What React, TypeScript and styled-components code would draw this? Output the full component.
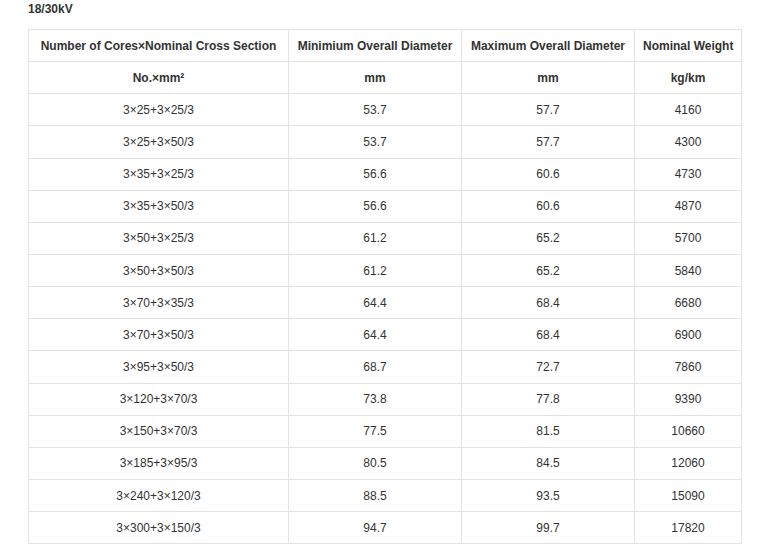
import React from "react";
import styled, { createGlobalStyle } from "styled-components";

const Global = createGlobalStyle`
  html, body { margin: 0; padding: 0; background: #fff; }
  body { font-family: "Liberation Sans", Arial, sans-serif; color: #333; }
`;

const Page = styled.div`
  padding: 1px 0 0 28px;
`;

const Title = styled.div`
  font-size: 12px;
  font-weight: bold;
  line-height: 17px;
  height: 28px;
  color: #333;
`;

const Table = styled.table`
  border-collapse: collapse;
  table-layout: fixed;
  width: 713px;
  font-size: 12px;
`;

const Cell = styled.td<{ $bold?: boolean }>`
  border: 1px solid #e3e3e3;
  height: 31.15px;
  padding: 0 8px;
  text-align: center;
  vertical-align: middle;
  font-weight: ${(p) => (p.$bold ? "bold" : "normal")};
  color: #333;
  white-space: nowrap;
`;

const rows: [string, string, string, string][] = [
  ["3×25+3×25/3", "53.7", "57.7", "4160"],
  ["3×25+3×50/3", "53.7", "57.7", "4300"],
  ["3×35+3×25/3", "56.6", "60.6", "4730"],
  ["3×35+3×50/3", "56.6", "60.6", "4870"],
  ["3×50+3×25/3", "61.2", "65.2", "5700"],
  ["3×50+3×50/3", "61.2", "65.2", "5840"],
  ["3×70+3×35/3", "64.4", "68.4", "6680"],
  ["3×70+3×50/3", "64.4", "68.4", "6900"],
  ["3×95+3×50/3", "68.7", "72.7", "7860"],
  ["3×120+3×70/3", "73.8", "77.8", "9390"],
  ["3×150+3×70/3", "77.5", "81.5", "10660"],
  ["3×185+3×95/3", "80.5", "84.5", "12060"],
  ["3×240+3×120/3", "88.5", "93.5", "15090"],
  ["3×300+3×150/3", "94.7", "99.7", "17820"],
];

export default function App() {
  return (
    <Page>
      <Global />
      <Title>18/30kV</Title>
      <Table>
        <colgroup>
          <col style={{ width: 260 }} />
          <col style={{ width: 173 }} />
          <col style={{ width: 173 }} />
          <col style={{ width: 107 }} />
        </colgroup>
        <tbody>
          <tr>
            <Cell $bold>Number of Cores×Nominal Cross Section</Cell>
            <Cell $bold>Minimium Overall Diameter</Cell>
            <Cell $bold>Maximum Overall Diameter</Cell>
            <Cell $bold>Nominal Weight</Cell>
          </tr>
          <tr>
            <Cell $bold>No.×mm²</Cell>
            <Cell $bold>mm</Cell>
            <Cell $bold>mm</Cell>
            <Cell $bold>kg/km</Cell>
          </tr>
          {rows.map((r) => (
            <tr key={r[0]}>
              {r.map((v, i) => (
                <Cell key={i}>{v}</Cell>
              ))}
            </tr>
          ))}
        </tbody>
      </Table>
    </Page>
  );
}
